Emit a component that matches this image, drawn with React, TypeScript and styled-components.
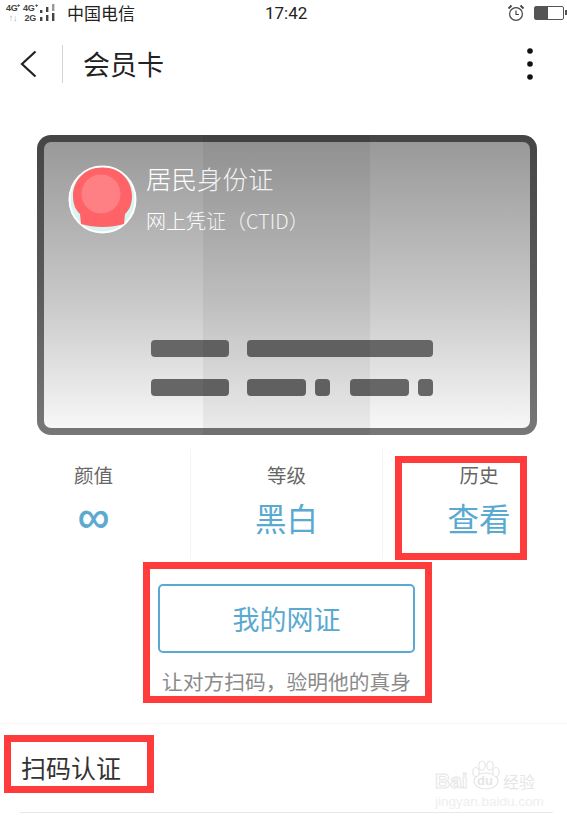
import styled, { createGlobalStyle } from 'styled-components';

const blue = '#5aa9d0';
const red = '#ff3b3b';

const GlobalStyle = createGlobalStyle`
    html, body {
        margin: 0;
        padding: 0;
        background: #fff;
    }
    body {
        font-family: "Noto Sans CJK SC", "Liberation Sans", sans-serif;
    }
`;

const StatusBar = () => (
    <StatusRow>
        <Network>
            <NetColumn>
                <NetText>4G⁺</NetText>
                <NetArrows>↑↓</NetArrows>
            </NetColumn>
            <NetColumn>
                <NetText>4G⁺</NetText>
                <NetText>2G</NetText>
            </NetColumn>
            <svg width="15" height="18" viewBox="0 0 15 18" fill="#444">
                <rect x="0" y="13" width="2.4" height="4" />
                <rect x="0" y="6" width="2.4" height="3" />
                <rect x="6" y="11" width="2.4" height="6" />
                <rect x="6" y="3" width="2.4" height="5" />
                <rect x="12" y="9" width="2.4" height="8" />
                <rect x="12" y="0" width="2.4" height="7" fill="#999" />
            </svg>
        </Network>
        <Carrier>中国电信</Carrier>
        <Clock>17:42</Clock>
        <svg width="18" height="18" viewBox="0 0 18 18" fill="none" stroke="#444" strokeWidth="1.2">
            <circle cx="9" cy="10" r="6.4" />
            <path d="M9 6.5V10.5H12" />
            <path d="M1.5 4.5L4.5 1.5M16.5 4.5L13.5 1.5" strokeWidth="1.8" />
        </svg>
        <Battery>
            <BatteryFill />
        </Battery>
    </StatusRow>
);

const NavBar = () => (
    <Nav>
        <svg width="17" height="28" viewBox="0 0 17 28" fill="none" stroke="#222" strokeWidth="2.2">
            <path d="M15.5 1.5L2 14L15.5 26.5" />
        </svg>
        <NavDivider />
        <NavTitle>会员卡</NavTitle>
        <svg width="8" height="34" viewBox="0 0 8 34" fill="#111">
            <circle cx="4" cy="4" r="2.8" />
            <circle cx="4" cy="17" r="2.8" />
            <circle cx="4" cy="30" r="2.8" />
        </svg>
    </Nav>
);

const Avatar = () => (
    <svg width="69" height="69" viewBox="0 0 69 69">
        <circle cx="34.5" cy="34.5" r="33" fill="#d9f2f2" stroke="#fff" strokeWidth="2" />
        <path
            d="M34.5 2.5C16 2.5 5 16 5 31C5 40 8 45 12 49L13 59C26 63 43 63 56 59L57 49C61 45 64 40 64 31C64 16 53 2.5 34.5 2.5Z"
            fill="#ff6367"
        />
        <circle cx="33" cy="29" r="19.5" fill="#ff8084" />
    </svg>
);

const Card = () => (
    <CardFrame>
        <CardFace>
            <CardHeader>
                <Avatar />
                <CardTitles>
                    <CardTitle>居民身份证</CardTitle>
                    <CardSubtitle>网上凭证（CTID）</CardSubtitle>
                </CardTitles>
            </CardHeader>
            <BarRows>
                <BarRow>
                    <Bar $width={78} />
                    <Bar $width={186} />
                </BarRow>
                <BarRow>
                    <Bar $width={78} />
                    <BarPairs>
                        <BarPair>
                            <Bar $width={59} />
                            <Bar $width={15} />
                        </BarPair>
                        <BarPair>
                            <Bar $width={59} />
                            <Bar $width={15} />
                        </BarPair>
                    </BarPairs>
                </BarRow>
            </BarRows>
        </CardFace>
        <CardBand />
    </CardFrame>
);

const stats = [
    { label: '颜值', value: '∞' },
    { label: '等级', value: '黑白' },
    { label: '历史', value: '查看', marked: true },
];

const App = () => {
    return (
        <Page>
            <GlobalStyle />
            <StatusBar />
            <NavBar />
            <Card />
            <Stats>
                {stats.map((stat) => (
                    <Stat key={stat.label}>
                        <StatLabel>{stat.label}</StatLabel>
                        <StatValue $symbol={stat.value === '∞'}>{stat.value}</StatValue>
                        {stat.marked && <StatMark />}
                    </Stat>
                ))}
            </Stats>
            <CardAction>
                <ActionButton>我的网证</ActionButton>
                <ActionHint>让对方扫码，验明他的真身</ActionHint>
            </CardAction>
            <Section>
                <SectionTitle>扫码认证</SectionTitle>
                <Watermark>
                    <WatermarkLogo>
                        <WatermarkBrand>Bai</WatermarkBrand>
                        <WatermarkPaw>
                            <svg width="30" height="30" viewBox="0 0 30 30" fill="#fff" stroke="#e6e6e6" strokeWidth="1.2">
                                <ellipse cx="15" cy="21" rx="12" ry="8" />
                                <ellipse cx="5" cy="12" rx="3.2" ry="4.5" />
                                <ellipse cx="11" cy="5.5" rx="3.2" ry="4.5" />
                                <ellipse cx="19" cy="5.5" rx="3.2" ry="4.5" />
                                <ellipse cx="25" cy="12" rx="3.2" ry="4.5" />
                            </svg>
                            <WatermarkDu>du</WatermarkDu>
                        </WatermarkPaw>
                        <WatermarkLabel>经验</WatermarkLabel>
                    </WatermarkLogo>
                    <WatermarkUrl>jingyan.baidu.com</WatermarkUrl>
                </Watermark>
            </Section>
        </Page>
    );
};

const Page = styled.div`
    position: relative;
    width: 567px;
    height: 820px;
    overflow: hidden;
    background: #fff;
`;

const StatusRow = styled.div`
    height: 26px;
    display: flex;
    align-items: center;
    padding-left: 6px;
    color: #222;
`;

const Network = styled.div`
    width: 61px;
    display: flex;
    align-items: center;
    gap: 3px;
`;

const NetColumn = styled.div`
    display: flex;
    flex-direction: column;
    align-items: center;
    font-family: "Liberation Sans", sans-serif;
`;

const NetText = styled.span`
    font-size: 9px;
    line-height: 10px;
    font-weight: 700;
    letter-spacing: -0.3px;
    color: #444;
`;

const NetArrows = styled(NetText)`
    color: #aaa;
`;

const Carrier = styled.div`
    width: 198px;
    font-size: 17px;
    line-height: 24px;
`;

const Clock = styled.div`
    width: 242px;
    font-family: "Roboto", "Liberation Sans", sans-serif;
    font-size: 17px;
    line-height: 24px;
`;

const Battery = styled.div`
    position: relative;
    width: 30px;
    height: 14px;
    margin-left: 9px;
    border: 1.5px solid #555;
    border-radius: 2px;
    box-sizing: border-box;
    background: #fff;

    &::after {
        content: '';
        position: absolute;
        top: 3px;
        right: -4px;
        width: 2px;
        height: 5px;
        background: #555;
    }
`;

const BatteryFill = styled.div`
    width: 13px;
    height: 100%;
    background: #555;
`;

const Nav = styled.div`
    height: 76px;
    display: flex;
    align-items: center;
    padding-left: 20px;
`;

const NavDivider = styled.div`
    width: 1px;
    height: 38px;
    margin-left: 25px;
    background: #d4d4d4;
`;

const NavTitle = styled.div`
    width: 443px;
    margin-left: 20px;
    font-size: 27px;
    line-height: 38px;
    color: #222;
`;

const CardFrame = styled.div`
    position: relative;
    width: 500px;
    height: 300px;
    box-sizing: border-box;
    margin: 33px 0 0 37px;
    padding: 7px;
    border-radius: 14px;
    background: linear-gradient(180deg, #454545 0%, #5a5a5a 50%, #777 100%);
    overflow: hidden;
`;

const CardFace = styled.div`
    height: 100%;
    box-sizing: border-box;
    padding: 23px 0 0 24px;
    border-radius: 7px;
    display: flex;
    flex-direction: column;
    background: linear-gradient(180deg, #999 0%, #c8c8c8 55%, #f7f7f7 100%);
`;

const CardBand = styled.div`
    position: absolute;
    top: 0;
    bottom: 0;
    left: 166px;
    width: 167px;
    background: rgba(0, 0, 0, 0.05);
`;

const CardHeader = styled.div`
    display: flex;
    gap: 9px;
    color: #fff;
`;

const CardTitles = styled.div`
    display: flex;
    flex-direction: column;
    margin-top: -5px;
`;

const CardTitle = styled.div`
    font-size: 25.5px;
    line-height: 36px;
    font-weight: 300;
`;

const CardSubtitle = styled.div`
    margin-top: 11px;
    font-size: 20px;
    line-height: 28px;
    font-weight: 300;
    color: #fff;
`;

const BarRows = styled.div`
    margin: 105px 0 0 83px;
    display: flex;
    flex-direction: column;
    gap: 22px;
`;

const BarRow = styled.div`
    display: flex;
    gap: 18px;
`;

const BarPairs = styled.div`
    display: flex;
    gap: 20px;
`;

const BarPair = styled.div`
    display: flex;
    gap: 9px;
`;

const Bar = styled.div<{ $width: number }>`
    width: ${(props) => props.$width}px;
    height: 17px;
    border-radius: 4px;
    background: #666;
`;

const Stats = styled.div`
    height: 110px;
    margin-top: 14px;
    display: grid;
    grid-template-columns: 191px 192px 184px;
`;

const Stat = styled.div`
    position: relative;
    display: flex;
    flex-direction: column;
    align-items: center;
    padding: 12px 3px 0 0;
    box-sizing: border-box;
    border-right: 1px solid #f4f4f4;

    &:nth-child(2) {
        padding-right: 0;
    }

    &:last-child {
        border-right: none;
        padding-right: 0;
        width: 192px;
    }
`;

const StatLabel = styled.div`
    font-size: 19.5px;
    line-height: 28px;
    color: #666;
`;

const StatValue = styled.div<{ $symbol: boolean }>`
    margin-top: 6px;
    font-family: ${(props) => (props.$symbol ? '"Liberation Sans", sans-serif' : 'inherit')};
    font-size: ${(props) => (props.$symbol ? '44px' : '31.5px')};
    -webkit-text-stroke: ${(props) => (props.$symbol ? '0.7px' : '0')} ${blue};
    line-height: 44px;
    color: ${blue};
`;

const StatMark = styled.div`
    position: absolute;
    top: 7px;
    left: 12px;
    width: 132px;
    height: 104px;
    box-sizing: border-box;
    border: 7px solid ${red};
`;

const CardAction = styled.div`
    width: 289px;
    height: 141px;
    box-sizing: border-box;
    margin: 3px 0 0 143px;
    padding: 15px 0 0 8px;
    border: 7px solid ${red};
`;

const ActionButton = styled.div`
    width: 257px;
    height: 69px;
    box-sizing: border-box;
    border: 2px solid ${blue};
    border-radius: 5px;
    display: flex;
    align-items: center;
    justify-content: center;
    font-size: 27px;
    color: ${blue};
`;

const ActionHint = styled.div`
    margin: 13px 0 0 4px;
    font-size: 20.75px;
    line-height: 30px;
    white-space: nowrap;
    color: #8a8a8a;
`;

const Section = styled.div`
    position: relative;
    height: 97px;
    margin-top: 20px;
    border-top: 1px solid #f6f6f6;
`;

const SectionTitle = styled.div`
    position: absolute;
    top: 11px;
    left: 4px;
    width: 150px;
    height: 58px;
    box-sizing: border-box;
    padding: 3px 0 0 10px;
    border: 7px solid ${red};
    font-size: 25px;
    line-height: 44px;
    color: #333;

    &::after {
        content: '';
        position: absolute;
        top: 70px;
        left: 9px;
        width: 533px;
        height: 1px;
        background: #e8e8e8;
    }
`;

const Watermark = styled.div`
    position: absolute;
    top: 36px;
    left: 435px;
    width: 100px;
    display: flex;
    flex-direction: column;
    font-family: "Liberation Sans", sans-serif;
    color: #fff;
`;

const WatermarkLogo = styled.div`
    display: flex;
    align-items: flex-end;
`;

const WatermarkBrand = styled.div`
    width: 37px;
    font-size: 21px;
    line-height: 18px;
    font-weight: 700;
    -webkit-text-stroke: 1px #e6e6e6;
`;

const WatermarkPaw = styled.div`
    position: relative;
    width: 30px;
    height: 30px;
`;

const WatermarkDu = styled.div`
    position: absolute;
    left: 6px;
    bottom: 2px;
    font-size: 13px;
    line-height: 14px;
    font-weight: 700;
    color: #e6e6e6;
`;

const WatermarkLabel = styled.div`
    margin-left: 2px;
    font-family: "Noto Sans CJK SC", sans-serif;
    font-size: 16px;
    line-height: 18px;
    white-space: nowrap;
    color: #e6e6e6;
`;

const WatermarkUrl = styled.div`
    margin-top: 6px;
    font-size: 13.5px;
    line-height: 12px;
    white-space: nowrap;
    color: #eee;
`;

export default App;
